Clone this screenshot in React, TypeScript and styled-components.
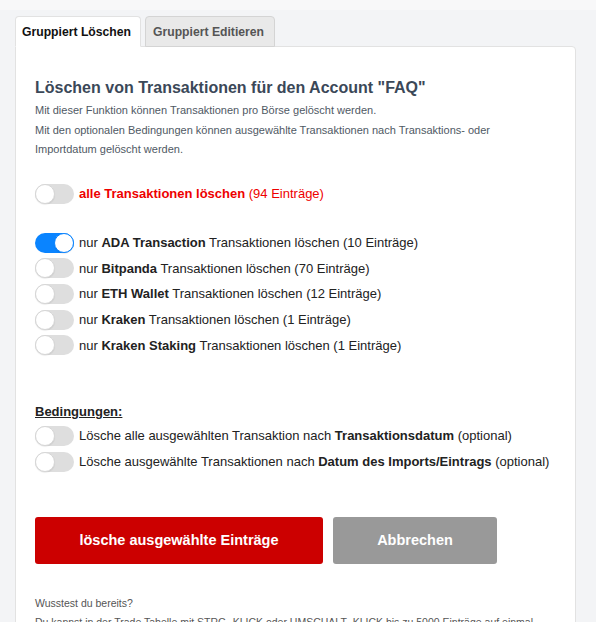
import React, { useState } from "react";
import styled, { createGlobalStyle } from "styled-components";

const Global = createGlobalStyle`
  html, body { margin: 0; padding: 0; background: #f3f4f6; }
  body { font-family: "Liberation Sans", Arial, sans-serif; }
  * { box-sizing: border-box; }
`;

const Page = styled.div`
  padding: 16px 20px 0 15px;
  width: 596px;
  height: 622px;
  overflow: hidden;
  background: linear-gradient(#f8f8f9 0, #f8f8f9 10px, #f3f4f6 10px);
`;

const Tabs = styled.div`
  display: flex;
  gap: 4px;
  position: relative;
  z-index: 1;
  margin-bottom: -1px;
`;

const Tab = styled.div<{ $active?: boolean }>`
  height: 31px;
  padding: 0 0 0 ${(p) => (p.$active ? 6 : 7)}px;
  width: ${(p) => (p.$active ? 126 : 130)}px;
  display: flex;
  align-items: center;
  white-space: nowrap;
  font-size: 12.2px;
  font-weight: bold;
  color: ${(p) => (p.$active ? "#111" : "#555")};
  background: ${(p) => (p.$active ? "#fff" : "#e9e9e9")};
  border: 1px solid ${(p) => (p.$active ? "#e2e2e2" : "#d4d4d4")};
  border-bottom: ${(p) => (p.$active ? "1px solid #fff" : "1px solid #d4d4d4")};
  border-radius: 4px 4px 0 0;
`;

const Card = styled.div`
  width: 561px;
  background: #fff;
  border: 1px solid #e2e2e2;
  border-radius: 0 4px 0 0;
  padding: 31px 19px 0 19px;
  min-height: 600px;
`;

const Title = styled.h2`
  margin: 0 0 3px;
  font-size: 16px;
  font-weight: bold;
  color: #3b4858;
  line-height: 20px;
`;

const Desc = styled.p`
  margin: 0;
  max-width: 470px;
  font-size: 11px;
  line-height: 19.5px;
  color: #4f5964;
`;

const Section = styled.div<{ $mt: number }>`
  margin-top: ${(p) => p.$mt}px;
  display: flex;
  flex-direction: column;
  gap: 5.7px;
`;

const Row = styled.label<{ $red?: boolean }>`
  display: flex;
  align-items: center;
  gap: 5px;
  font-size: 13px;
  color: ${(p) => (p.$red ? "#ee0000" : "#222")};
  cursor: pointer;
  height: 20px;
  white-space: nowrap;
  b { font-weight: bold; }
`;

const Track = styled.span<{ $on: boolean }>`
  position: relative;
  flex: none;
  width: 39px;
  height: 20px;
  border-radius: 10px;
  background: ${(p) => (p.$on ? "#0a84ff" : "#dedede")};
  transition: background 0.15s;
`;

const Knob = styled.span<{ $on: boolean }>`
  position: absolute;
  top: 0;
  left: ${(p) => (p.$on ? 19 : 0)}px;
  width: 20px;
  height: 20px;
  border-radius: 50%;
  background: #fff;
  border: 1px solid ${(p) => (p.$on ? "#0a84ff" : "#d6d6d6")};
  box-shadow: 0 1px 1px rgba(0,0,0,0.08);
`;

const SubHead = styled.div`
  font-size: 13px;
  font-weight: bold;
  text-decoration: underline;
  color: #222;
  height: 18px;
  display: flex;
  align-items: center;
`;

const Buttons = styled.div`
  margin-top: 45px;
  display: flex;
  gap: 10px;
`;

const Button = styled.button<{ $variant: "danger" | "muted" }>`
  height: 47px;
  width: ${(p) => (p.$variant === "danger" ? 288 : 164)}px;
  border: none;
  border-radius: 3px;
  background: ${(p) => (p.$variant === "danger" ? "#cc0000" : "#999999")};
  color: #fff;
  font-family: "Liberation Sans", Arial, sans-serif;
  font-size: 14.5px;
  font-weight: bold;
  cursor: pointer;
`;

const Hint = styled.div`
  margin-top: 30px;
  font-size: 10.5px;
  line-height: 19px;
  color: #555;
`;

function Toggle({ on }: { on: boolean }) {
  return (
    <Track $on={on}>
      <Knob $on={on} />
    </Track>
  );
}

const exchanges = [
  { name: "ADA Transaction", count: 10 },
  { name: "Bitpanda", count: 70 },
  { name: "ETH Wallet", count: 12 },
  { name: "Kraken", count: 1 },
  { name: "Kraken Staking", count: 1 },
];

export default function App() {
  const [sel, setSel] = useState<boolean[]>([true, false, false, false, false]);
  const [all, setAll] = useState(false);
  const [cond, setCond] = useState([false, false]);
  return (
    <>
      <Global />
      <Page>
        <Tabs>
          <Tab $active>Gruppiert Löschen</Tab>
          <Tab>Gruppiert Editieren</Tab>
        </Tabs>
        <Card>
          <Title>Löschen von Transaktionen für den Account "FAQ"</Title>
          <Desc>Mit dieser Funktion können Transaktionen pro Börse gelöscht werden.</Desc>
          <Desc>
            Mit den optionalen Bedingungen können ausgewählte Transaktionen nach Transaktions- oder
            Importdatum gelöscht werden.
          </Desc>

          <Section $mt={24}>
            <Row $red onClick={() => setAll(!all)}>
              <Toggle on={all} />
              <span>
                <b>alle Transaktionen löschen</b> (94 Einträge)
              </span>
            </Row>
          </Section>

          <Section $mt={29}>
            {exchanges.map((e, i) => (
              <Row
                key={e.name}
                onClick={() => setSel(sel.map((v, j) => (j === i ? !v : v)))}
              >
                <Toggle on={sel[i]} />
                <span>
                  nur <b>{e.name}</b> Transaktionen löschen ({e.count} Einträge)
                </span>
              </Row>
            ))}
          </Section>

          <Section $mt={47}>
            <SubHead>Bedingungen:</SubHead>
            <Row onClick={() => setCond([!cond[0], cond[1]])}>
              <Toggle on={cond[0]} />
              <span>
                Lösche alle ausgewählten Transaktion nach <b>Transaktionsdatum</b> (optional)
              </span>
            </Row>
            <Row onClick={() => setCond([cond[0], !cond[1]])}>
              <Toggle on={cond[1]} />
              <span>
                Lösche ausgewählte Transaktionen nach <b>Datum des Imports/Eintrags</b> (optional)
              </span>
            </Row>
          </Section>

          <Buttons>
            <Button $variant="danger">lösche ausgewählte Einträge</Button>
            <Button $variant="muted">Abbrechen</Button>
          </Buttons>

          <Hint>
            Wusstest du bereits?
            <br />
            Du kannst in der Trade Tabelle mit STRG- KLICK oder UMSCHALT- KLICK bis zu 5000 Einträge auf einmal
            auswählen.
          </Hint>
        </Card>
      </Page>
    </>
  );
}
